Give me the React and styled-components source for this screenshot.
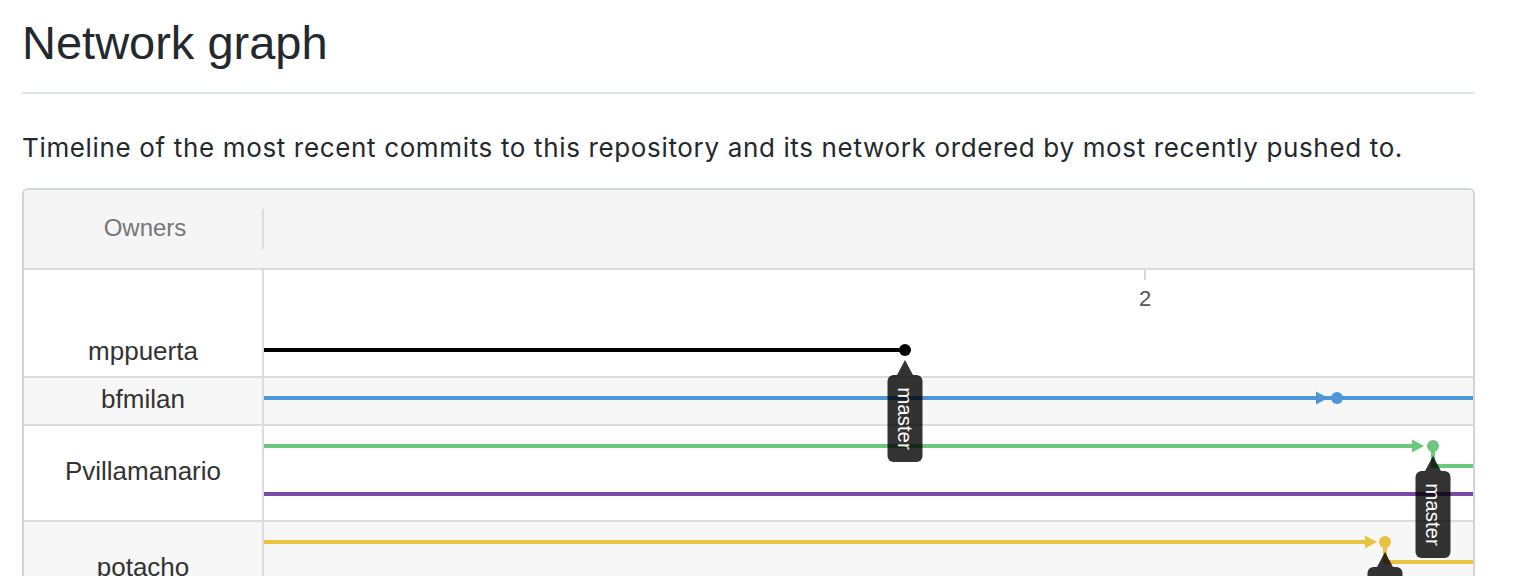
import React from "react"
import styled, { createGlobalStyle } from "styled-components"

const GlobalStyle = createGlobalStyle`
  body {
    margin: 0;
    background: #fff;
    color: #24292e;
    font-family: "Liberation Sans", Arial, sans-serif;
  }
`

const Page = styled.div`
  width: 1453px;
  padding: 13px 0 0 22px;
`

const Heading = styled.h2`
  margin: 0;
  padding-bottom: 19px;
  border-bottom: 2px solid #e1e4e8;
  font-size: 47px;
  font-weight: 400;
  line-height: 60px;
`

const Lead = styled.p`
  margin: 36px 0 22px;
  font-family: Inter, "Liberation Sans", sans-serif;
  font-size: 26px;
  line-height: 36px;
  letter-spacing: 0.65px;
`

const GraphBox = styled.div`
  border: 2px solid #d1d5da;
  border-radius: 6px;
  overflow: hidden;
`

const GraphHeader = styled.div`
  display: flex;
  align-items: center;
  height: 78px;
  background: #f5f5f5;
  border-bottom: 2px solid #dcdcdc;
`

const OwnersTitle = styled.div`
  width: 238px;
  padding: 0 0 2px 4px;
  text-align: center;
  font-size: 24px;
  color: #767676;
  box-sizing: border-box;
`

const HeaderDivider = styled.div`
  width: 2px;
  height: 40px;
  background: #dcdcdc;
`

const GraphBody = styled.div`
  position: relative;
`

const Row = styled.div`
  display: flex;
  height: ${(p) => p.$height}px;
  background: ${(p) => (p.$shaded ? "#f7f7f7" : "#fff")};
  border-bottom: 2px solid #dcdcdc;
`

const OwnerCell = styled.div`
  width: 238px;
  padding-top: ${(p) => p.$offset}px;
  border-right: 2px solid #dcdcdc;
  text-align: center;
  font-size: 26px;
  line-height: 20px;
  color: #333;
`

const Lanes = styled.div`
  flex: 1;
`

const Timeline = styled.svg`
  position: absolute;
  top: 0;
  left: 240px;
  width: calc(100% - 240px);
  height: 100%;
  overflow: visible;
  pointer-events: none;
  font-family: "Liberation Sans", Arial, sans-serif;
`

const owners = [
  { name: "mppuerta", height: 106, offset: 71 },
  { name: "bfmilan", height: 46, offset: 11, shaded: true },
  { name: "Pvillamanario", height: 94, offset: 35 },
  { name: "potacho", height: 94, offset: 35, shaded: true },
]

const END = 1209

// one entry per branch lane in the graph
const branches = [
  { color: "#000", y: 80, dot: 641, stop: 641, label: true },
  { color: "#4d96d8", y: 128, dot: 1073, arrow: 1064, stop: END },
  { color: "#6cc67b", y: 176, dot: 1169, arrow: 1160, stop: 1154, drop: 196, label: true },
  { color: "#7c4aa5", y: 224, stop: END },
  { color: "#e9c23f", y: 272, dot: 1121, arrow: 1113, stop: 1107, drop: 292, label: true },
]

const Arrow = ({ x, y, color }) => (
  <polygon points={`${x - 12},${y - 6.5} ${x},${y} ${x - 12},${y + 6.5}`} fill={color} />
)

const BranchLabel = ({ x, y }) => (
  <g fill="rgba(0,0,0,0.8)">
    <polygon points={`${x},${y + 10} ${x - 8},${y + 25} ${x + 8},${y + 25}`} />
    <rect x={x - 17.5} y={y + 25} width="35" height="87" rx="6" />
    <text
      x={x}
      y={y + 68.5}
      transform={`rotate(90 ${x} ${y + 68.5})`}
      fill="#fff"
      fontSize="20.5"
      textAnchor="middle"
      dominantBaseline="central"
    >
      master
    </text>
  </g>
)

const Graph = () => (
  <Timeline>
    <line x1="881" y1="0" x2="881" y2="10" stroke="#d6d6d6" strokeWidth="2" />
    <text x="881" y="36" fontSize="22" fill="#555" textAnchor="middle">2</text>
    {branches.map((b) => (
      <g key={b.y}>
        <line x1="0" y1={b.y} x2={b.stop} y2={b.y} stroke={b.color} strokeWidth="4" />
        {b.arrow && <Arrow x={b.arrow} y={b.y} color={b.color} />}
        {b.drop && (
          <polyline
            points={`${b.dot},${b.y} ${b.dot},${b.drop} ${END},${b.drop}`}
            fill="none"
            stroke={b.color}
            strokeWidth="4"
          />
        )}
        {b.dot && <circle cx={b.dot} cy={b.y} r="6" fill={b.color} />}
      </g>
    ))}
    {branches.filter((b) => b.label).map((b) => (
      <BranchLabel key={b.y} x={b.dot} y={b.y} />
    ))}
  </Timeline>
)

const App = () => {
  return (
    <Page>
      <GlobalStyle />
      <Heading>Network graph</Heading>
      <Lead>
        Timeline of the most recent commits to this repository and its network ordered by most
        recently pushed to.
      </Lead>
      <GraphBox>
        <GraphHeader>
          <OwnersTitle>Owners</OwnersTitle>
          <HeaderDivider />
        </GraphHeader>
        <GraphBody>
          {owners.map((o) => (
            <Row key={o.name} $height={o.height} $shaded={o.shaded}>
              <OwnerCell $offset={o.offset}>{o.name}</OwnerCell>
              <Lanes />
            </Row>
          ))}
          <Graph />
        </GraphBody>
      </GraphBox>
    </Page>
  )
}

export default App
